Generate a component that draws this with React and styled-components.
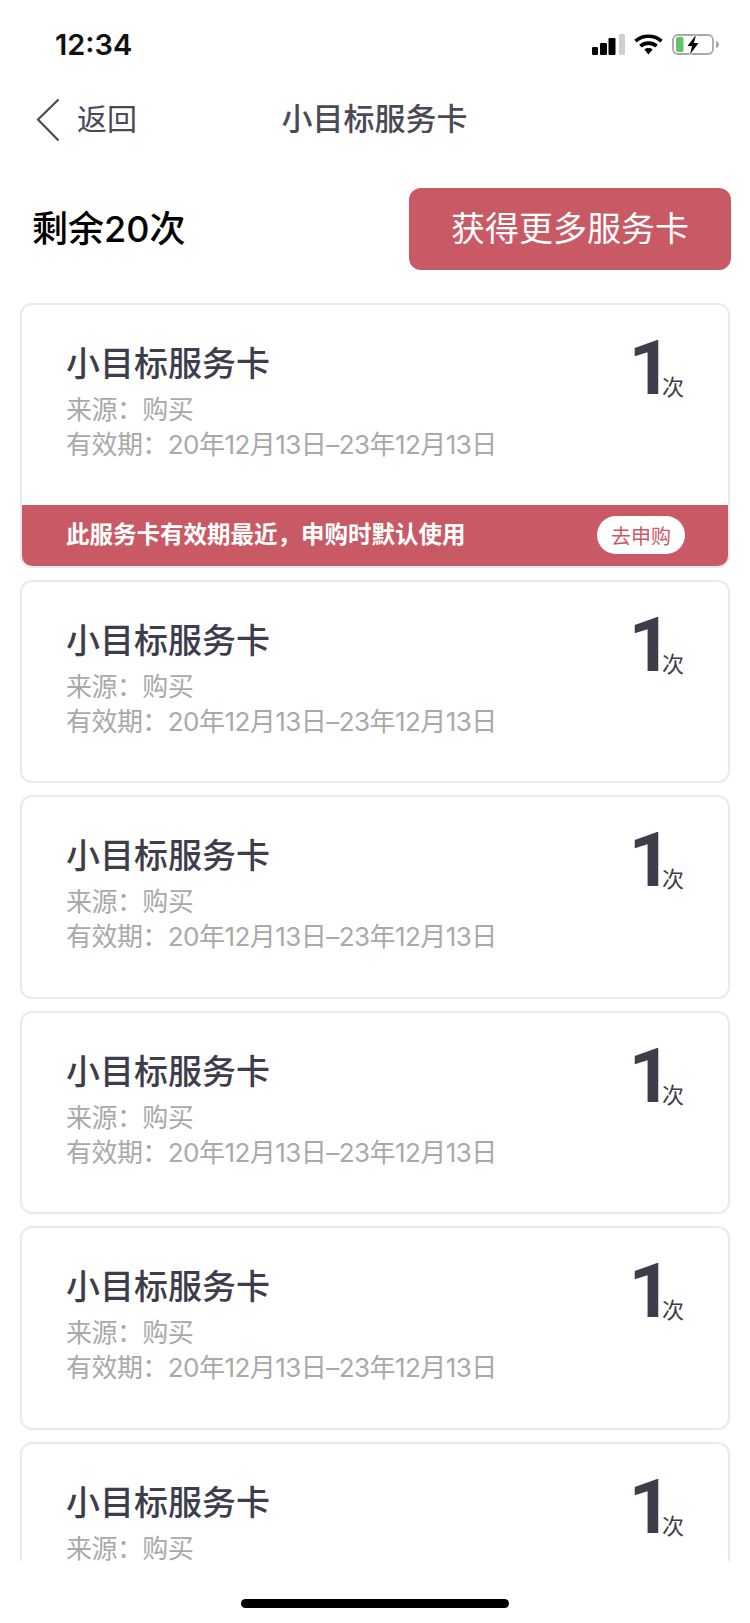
import React from "react";
import styled, { createGlobalStyle } from "styled-components";

const Global = createGlobalStyle`
  html, body { margin: 0; padding: 0; background: #fff; }
  * { box-sizing: border-box; }
  body { font-family: Inter, "Noto Sans CJK SC", sans-serif; }
`;

const Page = styled.div`
  width: 750px;
  height: 1623px;
  display: flex;
  flex-direction: column;
  overflow: hidden;
  background: #fff;
`;

const StatusBar = styled.div`
  height: 88px;
  flex: none;
  padding: 25px 31px 0 55px;
  display: flex;
  justify-content: space-between;
  align-items: flex-start;
`;

const Time = styled.div`
  font-size: 29px;
  line-height: 40px;
  font-weight: 600;
  color: #111;
  font-family: Inter, sans-serif;
`;

const StatusIcons = styled.div`
  display: flex;
  align-items: center;
  gap: 9px;
  padding-top: 9px;
`;

const NavBar = styled.div`
  height: 64px;
  flex: none;
  position: relative;
  display: flex;
  align-items: center;
  padding-left: 36px;
  color: #4a4a56;
`;

const BackText = styled.span`
  font-size: 30px;
  margin: 0 0 6px 17px;
`;

const NavTitle = styled.div`
  position: absolute;
  left: 0;
  right: 0;
  top: 6px;
  padding-right: 1px;
  text-align: center;
  font-size: 31px;
  font-weight: 500;
`;

const Summary = styled.div`
  flex: none;
  height: 82px;
  margin-top: 36px;
  padding: 0 19px 0 32px;
  display: flex;
  align-items: center;
  justify-content: space-between;
`;

const Remaining = styled.div`
  font-size: 36px;
  font-weight: 500;
  color: #000;
  margin-bottom: 6px;
`;

const MoreButton = styled.button`
  width: 322px;
  height: 82px;
  border: 0;
  border-radius: 12px;
  background: #c95a65;
  color: #fff;
  font-family: inherit;
  font-size: 34px;
  font-weight: 400;
  padding: 0 0 6px 0;
`;

const List = styled.div`
  flex: 1;
  min-height: 0;
  overflow: hidden;
  margin-top: 33px;
  padding: 0 20px;
  display: flex;
  flex-direction: column;
  gap: 12px;
`;

const Card = styled.div`
  flex: none;
  border: 2px solid #e8e9f1;
  border-radius: 12px;
  overflow: hidden;
  background: #fff;
`;

const CardBody = styled.div`
  height: 199.5px;
  padding: 38px 44px 0 44px;
  display: flex;
  justify-content: space-between;
  align-items: flex-start;
`;

const CardTitle = styled.div`
  font-size: 34px;
  line-height: 42px;
  font-weight: 500;
  color: #3d3d4c;
`;

const Meta = styled.div`
  font-size: 26px;
  line-height: 35px;
  letter-spacing: -0.55px;
  color: #a9a9a9;
  margin-top: 7px;
  & + & {
    margin-top: 0;
  }
`;

const Count = styled.div`
  display: flex;
  align-items: flex-end;
  margin-top: -19px;
  color: #3d3d4c;
`;

const CountNumber = styled.span`
  font-family: Roboto, sans-serif;
  font-size: 76px;
  line-height: 88px;
  font-weight: 700;
  letter-spacing: -10px;
`;

const CountUnit = styled.span`
  font-size: 22px;
  line-height: 30px;
  margin-bottom: 10px;
`;

const Banner = styled.div`
  height: 61px;
  padding: 0 43px 0 44px;
  background: #c95a65;
  display: flex;
  align-items: center;
  justify-content: space-between;
  color: #fff;
  font-size: 23.5px;
  font-weight: 700;
`;

const BannerText = styled.span`
  margin-bottom: 4px;
`;

const Pill = styled.span`
  width: 88px;
  height: 38px;
  border-radius: 19px;
  background: #fff;
  color: #c95a65;
  font-size: 20px;
  font-weight: 400;
  display: flex;
  align-items: center;
  justify-content: center;
`;

const HomeArea = styled.div`
  flex: none;
  height: 62px;
  background: #fff;
  display: flex;
  justify-content: center;
  padding-top: 38px;
`;

const HomeBar = styled.div`
  width: 268px;
  height: 9px;
  border-radius: 5px;
  background: #000;
`;

const Signal = () => (
  <svg width="33" height="21" viewBox="0 0 33 21">
    <rect x="0" y="13" width="6" height="8" rx="1.2" fill="#000" />
    <rect x="8" y="9" width="7" height="12" rx="1.2" fill="#000" />
    <rect x="16.5" y="4" width="7" height="17" rx="1.2" fill="#000" />
    <rect x="27" y="0" width="6" height="21" rx="1.2" fill="#cfcfcf" />
  </svg>
);

const Wifi = () => (
  <svg width="29" height="21" viewBox="0 0 29 21" fill="none">
    <path d="M1.5 7.2C8.8 .6 20.2 .6 27.5 7.2" stroke="#000" strokeWidth="3.6" />
    <path d="M6.4 12.1C10.9 8.1 18.1 8.1 22.6 12.1" stroke="#000" strokeWidth="3.6" />
    <path d="M10.4 15.4C12.7 13.6 16.3 13.6 18.6 15.4L14.5 20.4Z" fill="#000" />
  </svg>
);

const Battery = () => (
  <svg width="47" height="21" viewBox="0 0 47 21" fill="none">
    <rect x="1" y="1" width="40" height="19" rx="5" stroke="#a8a8a8" strokeWidth="1.8" />
    <rect x="4" y="3" width="7.5" height="15" rx="2" fill="#62c466" />
    <path d="M44 7C46 7.6 47 9 47 10.5S46 13.4 44 14Z" fill="#a8a8a8" />
    <path d="M24 1L15.5 12H20L18 20.5L26.5 9H22Z" fill="#000" stroke="#fff" strokeWidth="1.4" paintOrder="stroke" />
  </svg>
);

const Chevron = () => (
  <svg width="24" height="44" viewBox="0 0 24 44" fill="none">
    <path d="M22.5 1.5L2 21.5 22.5 42.5" stroke="#4a4a56" strokeWidth="2.2" />
  </svg>
);

const ServiceCard = ({ featured }) => (
  <Card>
    <CardBody>
      <div>
        <CardTitle>小目标服务卡</CardTitle>
        <Meta>来源：购买</Meta>
        <Meta>有效期：20年12月13日–23年12月13日</Meta>
      </div>
      <Count>
        <CountNumber>1</CountNumber>
        <CountUnit>次</CountUnit>
      </Count>
    </CardBody>
    {featured && (
      <Banner>
        <BannerText>此服务卡有效期最近，申购时默认使用</BannerText>
        <Pill>去申购</Pill>
      </Banner>
    )}
  </Card>
);

export default function App() {
  return (
    <Page>
      <Global />
      <StatusBar>
        <Time>12:34</Time>
        <StatusIcons>
          <Signal />
          <Wifi />
          <Battery />
        </StatusIcons>
      </StatusBar>
      <NavBar>
        <Chevron />
        <BackText>返回</BackText>
        <NavTitle>小目标服务卡</NavTitle>
      </NavBar>
      <Summary>
        <Remaining>剩余20次</Remaining>
        <MoreButton>获得更多服务卡</MoreButton>
      </Summary>
      <List>
        <ServiceCard featured />
        <ServiceCard />
        <ServiceCard />
        <ServiceCard />
        <ServiceCard />
        <ServiceCard />
      </List>
      <HomeArea>
        <HomeBar />
      </HomeArea>
    </Page>
  );
}
